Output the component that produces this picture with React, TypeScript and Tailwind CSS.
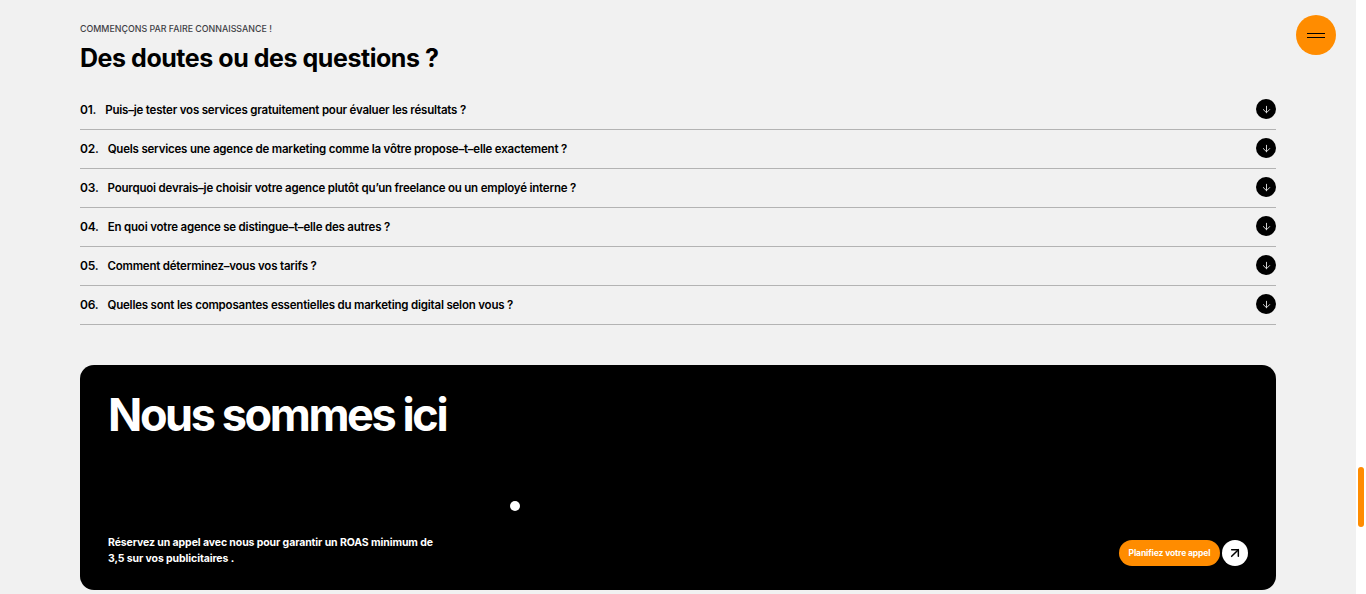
import { ArrowDown, ArrowUpRight } from "lucide-react";

const questions = [
  { num: "01.", text: "Puis–je tester vos services gratuitement pour évaluer les résultats ?", gap: "ml-[9px]" },
  { num: "02.", text: "Quels services une agence de marketing comme la vôtre propose–t–elle exactement ?", gap: "ml-[9px]" },
  { num: "03.", text: "Pourquoi devrais–je choisir votre agence plutôt qu’un freelance ou un employé interne ?", gap: "ml-[9px]" },
  { num: "04.", text: "En quoi votre agence se distingue–t–elle des autres ?", gap: "ml-[9px]" },
  { num: "05.", text: "Comment déterminez–vous vos tarifs ?", gap: "ml-[9px]" },
  { num: "06.", text: "Quelles sont les composantes essentielles du marketing digital selon vous ?", gap: "ml-[9px]" },
];

function FaqRow({ num, text, gap }: { num: string; text: string; gap: string }) {
  return (
    <div className="flex h-[39px] items-center justify-between border-b border-[#b3b3b3]">
      <p className="text-[11.5px] font-semibold tracking-[-0.2px] text-black">
        <span className="text-[12px]">{num}</span>
        <span className={gap}>{text}</span>
      </p>
      <span className="mb-[2px] flex h-5 w-5 items-center justify-center rounded-full bg-black">
        <ArrowDown className="h-[11px] w-[11px] text-[#e5e5e5]" strokeWidth={2} />
      </span>
    </div>
  );
}

export default function App() {
  return (
    <div className="relative flex h-[594px] overflow-hidden bg-white font-['Inter',sans-serif]">
      <main className="relative w-[1356px] bg-[#f1f1f1] pl-20 pr-20 pt-[23px]">
        <p className="text-[8.85px] leading-[11px] font-medium uppercase text-[#3f3f46]">
          Commençons par faire connaissance !
        </p>
        <h1 className="mt-[7px] text-[25px] leading-[34px] font-bold tracking-[-0.45px] text-black">
          Des doutes ou des questions ?
        </h1>

        <div className="mt-[16px]">
          {questions.map((q) => (
            <FaqRow key={q.num} num={q.num} text={q.text} gap={q.gap} />
          ))}
        </div>

        <section className="relative mt-10 flex h-[225px] flex-col justify-between rounded-[14px] bg-black pb-6 pl-7 pr-7 pt-[20px]">
          <h2 className="text-[45px] leading-[60px] font-bold tracking-[-2.4px] text-white">
            Nous sommes ici
          </h2>
          <div className="flex items-end justify-between">
            <p className="mb-[-1px] w-[340px] text-[10.5px] leading-4 font-bold tracking-[-0.1px] text-white">
              Réservez un appel avec nous pour garantir un ROAS minimum de 3,5 sur vos publicitaires .
            </p>
            <div className="flex items-center gap-[2px]">
              <span className="flex h-[26px] w-[101px] items-center justify-center rounded-full bg-[#ff8c00] text-[8.5px] font-bold tracking-[-0.12px] text-white">
                Planifiez votre appel
              </span>
              <span className="flex h-[26px] w-[26px] items-center justify-center rounded-full bg-white">
                <ArrowUpRight className="h-4 w-4 text-black" strokeWidth={2.25} />
              </span>
            </div>
          </div>
          <span className="absolute left-[430px] top-[136px] h-[10px] w-[10px] rounded-full bg-white" />
        </section>

        <button className="absolute left-[1296px] top-[15px] flex h-10 w-10 flex-col items-center justify-center gap-[3px] rounded-full bg-[#ff8c00]">
          <span className="h-px w-[18px] bg-black" />
          <span className="h-px w-[18px] bg-black" />
        </button>
      </main>

      <div className="w-[10px] bg-white pl-[2px] pr-[2px] pt-[467px]">
        <div className="h-[60px] w-[6px] rounded-full bg-[#ff8c00]" />
      </div>
    </div>
  );
}
